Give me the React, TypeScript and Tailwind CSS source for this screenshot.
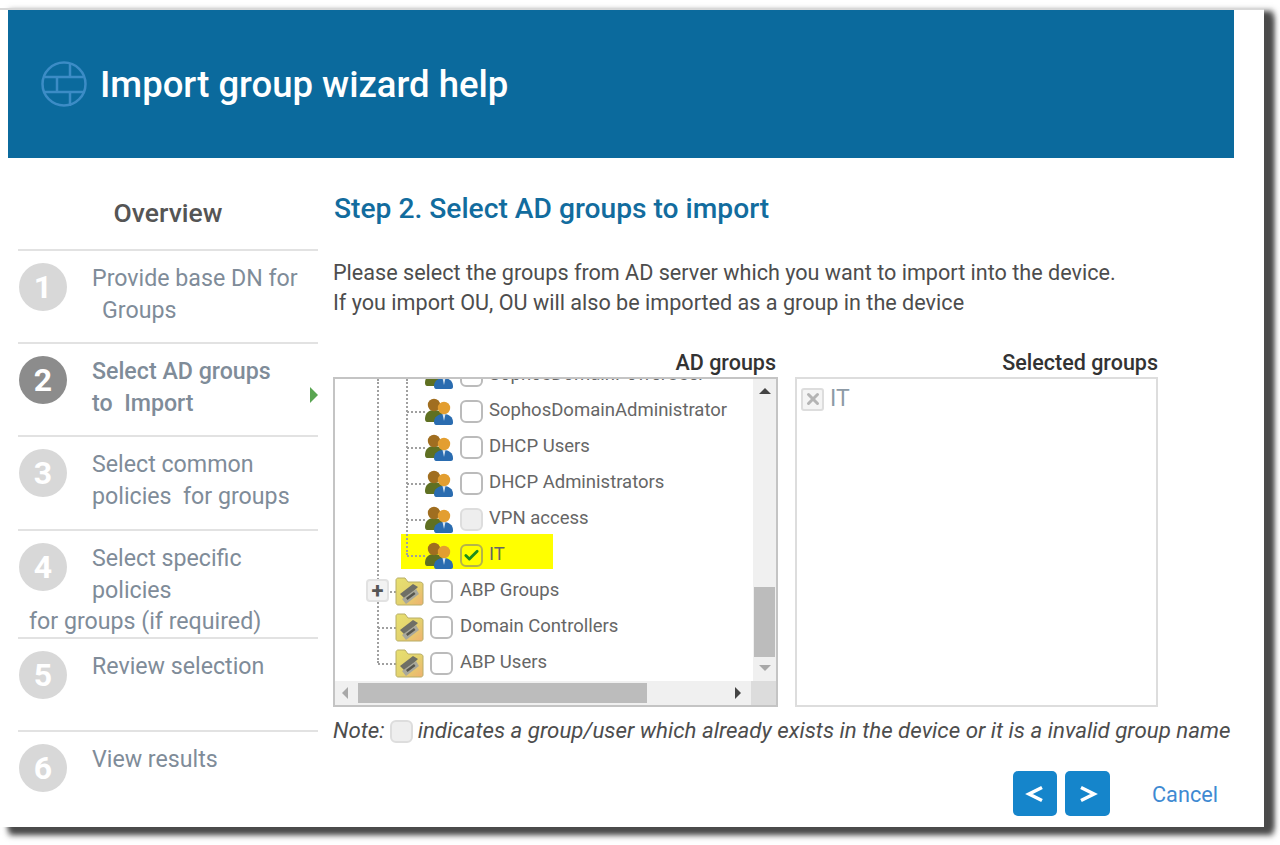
import { Check, X } from "lucide-react";

const font = "font-['Roboto','Liberation_Sans',sans-serif]";

function BrickIcon() {
  return (
    <svg width="46" height="48" viewBox="0 0 46 48" fill="none" stroke="#3c8cc6" strokeWidth="2.5" className="ml-[33px] mr-[13px]">
      <circle cx="23" cy="24" r="21.5" />
      <path d="M4 17h38M4 32h38M16 17v15M29 3v14M29 32v14" />
    </svg>
  );
}

function GroupIcon() {
  return (
    <svg width="32" height="30" viewBox="0 0 32 30">
      <path d="M2 23c0-6 4-9 9-9s10 3 10 9v3H4c-1 0-2-1-2-3z" fill="#5f7022" />
      <circle cx="11" cy="9" r="6.2" fill="#a06e20" />
      <path d="M11 26c0-5 4-8 9.500-8s9.500 3 9.500 8v1c0 1-1 2-2 2H13c-1 0-2-1-2-3z" fill="#2a6cb0" />
      <path d="M19.500 18h3l-1.500 7z" fill="#d6e4f0" />
      <circle cx="21" cy="12" r="6.200" fill="#e39e30" />
    </svg>
  );
}

function FolderIcon() {
  return (
    <svg width="30" height="30" viewBox="0 0 30 30">
      <defs>
        <linearGradient id="folder-fill" x1="0" y1="0" x2="1" y2="1">
          <stop offset="0" stopColor="#e8e070" />
          <stop offset="0.55" stopColor="#e3d26e" />
          <stop offset="1" stopColor="#f0b070" />
        </linearGradient>
      </defs>
      <path d="M2 4c0-1 1-2 2-2h7l3 4h12c1 0 3 1 3 2v19c0 1-1 2-2 2H4c-1 0-2-1-2-2z" fill="url(#folder-fill)" stroke="#b8ae66" />
      <path d="M6 18 19 8l5 3-13 12z" fill="#6e6f66" />
      <path d="M8 23 22 13l3 5-13 10z" fill="#a8a89c" />
      <path d="M12 22 20 16l1.500 2-8 6z" fill="#55554e" />
    </svg>
  );
}

function Box({ disabled, checked }: { disabled?: boolean; checked?: boolean }) {
  return (
    <span
      className={`flex h-[23px] w-[23px] shrink-0 items-center justify-center rounded-[6px] border-2 ${
        disabled ? "border-[#dddddd] bg-[#eeeeee]" : checked ? "border-[#b4b44a] bg-transparent" : "border-[#bbbbbb] bg-white"
      }`}
    >
      {checked && <Check size={17} strokeWidth={4} className="text-[#1c8c1c]" />}
    </span>
  );
}

type TreeRow = { label: string; kind: "group" | "folder"; disabled?: boolean; checked?: boolean; plus?: boolean };

const rows: TreeRow[] = [
  { label: "SophosDomainPowerUser", kind: "group" },
  { label: "SophosDomainAdministrator", kind: "group" },
  { label: "DHCP Users", kind: "group" },
  { label: "DHCP Administrators", kind: "group" },
  { label: "VPN access", kind: "group", disabled: true },
  { label: "IT", kind: "group", checked: true },
  { label: "ABP Groups", kind: "folder", plus: true },
  { label: "Domain Controllers", kind: "folder" },
  { label: "ABP Users", kind: "folder" },
];

function Tree() {
  return (
    <div className="relative min-w-0 flex-1 overflow-hidden">
      <div className="absolute left-[42px] top-0 z-10 h-[284px] border-l-2 border-dotted border-[#a0a0a0]" />
      <div className="absolute left-[71px] top-0 z-10 h-[176px] border-l-2 border-dotted border-[#a0a0a0]" />
      <div className="mt-[-22px]">
        {rows.map((row) => (
          <div
            key={row.label}
            className={`relative flex h-[36px] items-center text-[18.5px] text-[#666666] ${row.kind === "group" ? "pl-[88px]" : "pl-[59px]"}`}
          >
            {row.checked && <div className="absolute left-[66px] top-[-3px] h-[35px] w-[152px] bg-[#ffff00]" />}
            <div className={`absolute top-[18px] w-[18px] border-t-2 border-dotted border-[#a0a0a0] ${row.kind === "group" ? "left-[72px]" : "left-[43px]"}`} />
            {row.plus && (
              <div className="absolute left-[31px] top-[6px] z-20 flex h-[23px] w-[23px] items-center justify-center rounded-[4px] border-2 border-[#e2e2e2] bg-[#f2f2f2] text-[22px] font-bold leading-none text-[#555555]">
                +
              </div>
            )}
            <div className="relative flex items-center">
              {row.kind === "group" ? <GroupIcon /> : <FolderIcon />}
              <span className={row.kind === "group" ? "ml-[5px]" : "ml-[6px]"}>
                <Box disabled={row.disabled} checked={row.checked} />
              </span>
              <span className={`whitespace-nowrap ${row.kind === "group" ? "ml-[6px]" : "ml-[7px]"}`}>{row.label}</span>
            </div>
          </div>
        ))}
      </div>
    </div>
  );
}

const steps = [
  { n: 1, h: "h-[93px]", lines: ["Provide base DN for"], indented: "Groups" },
  { n: 2, h: "h-[93px]", lines: ["Select AD groups", "to  Import"], active: true },
  { n: 3, h: "h-[94px]", lines: ["Select common", "policies  for groups"] },
  { n: 4, h: "h-[108px]", lines: ["Select specific", "policies"], extra: "for groups (if required)" },
  { n: 5, h: "h-[93px]", lines: ["Review selection"] },
  { n: 6, h: "h-[93px]", lines: ["View results"] },
];

function Sidebar() {
  return (
    <div className="ml-[18px] w-[300px] shrink-0">
      <div className="flex h-[91px] items-center justify-center pt-[18px] text-[26.5px] font-medium text-[#555555]">Overview</div>
      {steps.map((s) => (
        <div key={s.n} className={`relative flex border-t-2 border-[#e2e2e2] pt-[12px] ${s.h}`}>
          <div
            className={`ml-[1px] flex h-[48px] w-[48px] shrink-0 items-center justify-center rounded-full text-[32px] font-bold text-white ${
              s.active ? "bg-[#8c8c8c]" : "bg-[#d8d8d8]"
            }`}
          >
            {s.n}
          </div>
          <div className={`ml-[25px] whitespace-pre text-[23.2px] leading-[31.5px] text-[#7f8c99] ${s.active ? "font-medium" : ""}`}>
            {s.lines.map((l) => (
              <div key={l}>{l}</div>
            ))}
            {s.indented && <div className="ml-[10px]">{s.indented}</div>}
            {s.extra && <div className="ml-[-63px]">{s.extra}</div>}
          </div>
          {s.active && (
            <div className="absolute right-0 top-[43px] h-0 w-0 border-y-[8px] border-l-[8px] border-y-transparent border-l-[#5aa552]" />
          )}
        </div>
      ))}
    </div>
  );
}

export default function App() {
  return (
    <div className={`h-[845px] w-[1280px] overflow-hidden bg-white pt-[8px] ${font}`}>
      <div className="h-[819px] w-[1264px] border-t-2 border-[#d8d8d8] bg-white shadow-[9px_8px_6px_#4a4a4a,9px_3px_6px_#4a4a4a]">
        {/* Header */}
        <div className="ml-[8px] flex h-[148px] w-[1226px] items-center bg-[#0b6a9d]">
          <BrickIcon />
          <h1 className="pt-[2px] text-[36.5px] font-medium text-white">Import group wizard help</h1>
        </div>

        <div className="flex">
          <Sidebar />

          {/* Step content */}
          <div className="ml-[15px] w-[915px] pt-[32px]">
            <h2 className="ml-[1px] text-[28.2px] font-medium leading-[38px] text-[#126c9e]">Step 2. Select AD groups to import</h2>
            <p className="mt-[30px] text-[21.6px] leading-[30px] text-[#4d4d4d]">
              Please select the groups from AD server which you want to import into the device.
              <br />
              If you import OU, OU will also be imported as a group in the device
            </p>

            <div className="mt-[31px] grid grid-cols-[445px_363px] gap-x-[17px] text-right text-[21.5px] font-medium leading-[28px] text-[#333333]">
              <div className="pr-[2px]">AD groups</div>
              <div>Selected groups</div>
            </div>

            <div className="grid h-[330px] grid-cols-[445px_363px] gap-x-[17px]">
              {/* AD groups panel */}
              <div className="flex flex-col border-2 border-[#c4c4c4] bg-white">
                <div className="flex min-h-0 flex-1">
                  <Tree />
                  <div className="flex w-[23px] shrink-0 flex-col items-center bg-[#f0f0f0]">
                    <div className="mt-[9px] h-0 w-0 border-x-[6px] border-b-[6px] border-x-transparent border-b-[#444444]" />
                    <div className="mt-[193px] h-[70px] w-[21px] bg-[#bcbcbc]" />
                    <div className="mt-[8px] h-0 w-0 border-x-[6px] border-t-[6px] border-x-transparent border-t-[#a8a8a8]" />
                  </div>
                </div>
                <div className="flex h-[24px] shrink-0">
                  <div className="flex flex-1 items-center bg-[#f0f0f0]">
                    <div className="ml-[7px] h-0 w-0 border-y-[6px] border-r-[6px] border-y-transparent border-r-[#a8a8a8]" />
                    <div className="ml-[10px] h-[20px] w-[289px] bg-[#bcbcbc]" />
                    <div className="ml-[88px] h-0 w-0 border-y-[6px] border-l-[6px] border-y-transparent border-l-[#444444]" />
                  </div>
                  <div className="w-[25px] bg-[#dcdcdc]" />
                </div>
              </div>

              {/* Selected groups panel */}
              <div className="border-2 border-[#dddddd] bg-white">
                <div className="ml-[4px] mt-[8px] flex items-center">
                  <span className="flex h-[23px] w-[23px] items-center justify-center rounded-[3px] border-2 border-[#dddddd] bg-[#f4f4f4]">
                    <X size={18} strokeWidth={4} className="text-[#b4b4b4]" />
                  </span>
                  <span className="ml-[6px] text-[23px] leading-[24px] text-[#8d9aa6]">IT</span>
                </div>
              </div>
            </div>

            <div className="mt-[10px] flex h-[28px] items-center whitespace-nowrap text-[22.3px] italic text-[#4d4d4d]">
              Note:
              <span className="mx-[5px] h-[23px] w-[23px] rounded-[6px] border-2 border-[#dddddd] bg-[#eeeeee]" />
              indicates a group/user which already exists in the device or it is a invalid group name
            </div>

            <div className="mt-[26px] flex items-center">
              <button className="ml-[680px] flex h-[45px] w-[44px] items-center justify-center rounded-[5px] bg-[#1585cb]">
                <svg width="20" height="20" viewBox="0 0 20 20" fill="none" stroke="white" strokeWidth="3.500"><path d="M17 3.500 4 10l13 6.500" /></svg>
              </button>
              <button className="ml-[8px] flex h-[45px] w-[45px] items-center justify-center rounded-[5px] bg-[#1585cb]">
                <svg width="20" height="20" viewBox="0 0 20 20" fill="none" stroke="white" strokeWidth="3.500"><path d="m3 3.500 13 6.500-13 6.500" /></svg>
              </button>
              <span className="ml-[42px] pt-[4px] text-[21.7px] text-[#3f8ad2]">Cancel</span>
            </div>
          </div>
        </div>
      </div>
    </div>
  );
}
